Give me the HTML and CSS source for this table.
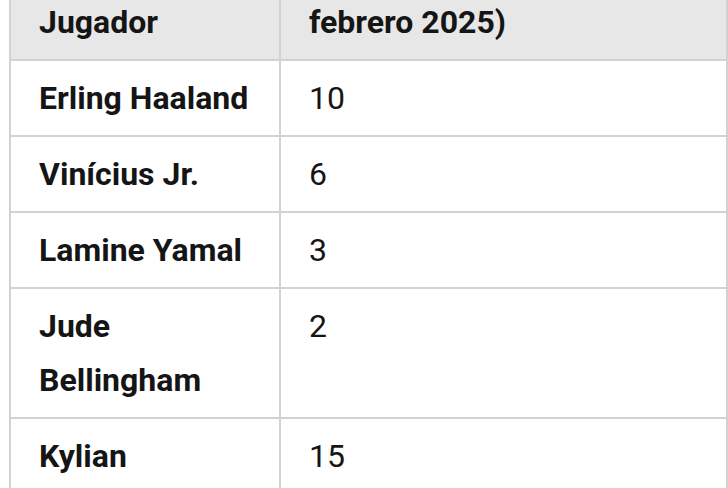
FILE: index.html
```html
<!DOCTYPE html>
<html lang="es">
<head>
<meta charset="utf-8">
<link rel="stylesheet" href="styles.css">
</head>
<body>
<table class="scorers">
  <colgroup><col class="c-name"><col class="c-goals"></colgroup>
  <thead>
    <tr><th>Jugador</th><th>febrero 2025)</th></tr>
  </thead>
  <tbody>
    <tr><td class="name">Erling Haaland</td><td>10</td></tr>
    <tr><td class="name">Vinícius Jr.</td><td>6</td></tr>
    <tr><td class="name">Lamine Yamal</td><td>3</td></tr>
    <tr><td class="name">Jude Bellingham</td><td>2</td></tr>
    <tr><td class="name">Kylian Mbappé</td><td>15</td></tr>
  </tbody>
</table>
</body>
</html>
```
FILE: styles.css
```css
html, body {
  margin: 0;
  padding: 0;
  background: #ffffff;
}
body {
  font-family: Roboto, "Liberation Sans", sans-serif;
  color: #151515;
  overflow: hidden;
}
.scorers {
  border-collapse: collapse;
  table-layout: fixed;
  width: 717px;
  margin: -17px 0 0 9px;
  font-size: 32px;
  line-height: 54px;
}
.c-name { width: 270px; }
.c-goals { width: 447px; }
.scorers th,
.scorers td {
  border: 2px solid #d2d2d2;
  padding: 10px 28px;
  text-align: left;
  vertical-align: top;
}
.scorers th {
  background: #e7e7e7;
  font-weight: 700;
}
.scorers td { font-weight: 400; }
.scorers td.name { font-weight: 700; }
```
